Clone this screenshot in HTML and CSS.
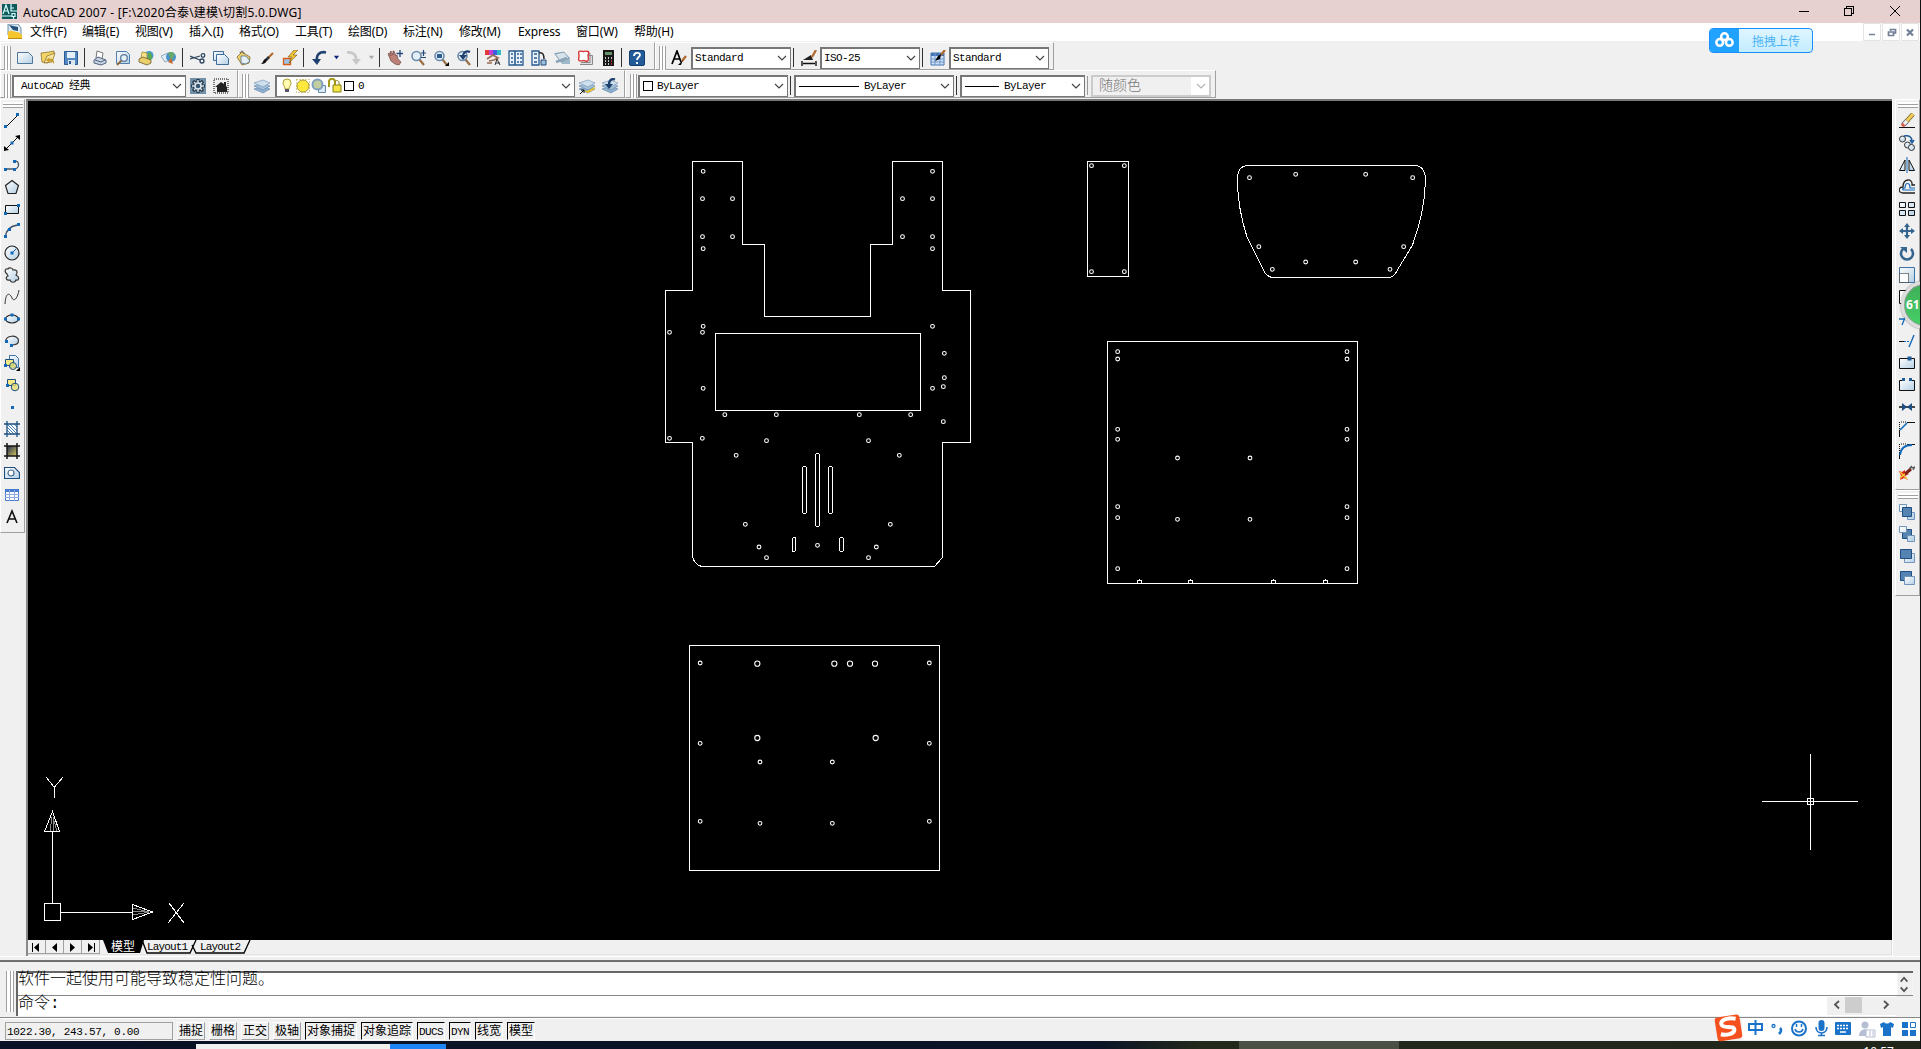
FILE: index.html
```html
<!DOCTYPE html>
<html lang="zh-CN">
<head>
<meta charset="utf-8">
<title>AutoCAD 2007</title>
<link rel="stylesheet" href="styles.css">
</head>
<body>
<svg class="defs" width="0" height="0">
  <defs>
    <linearGradient id="pale" x1="0" y1="0" x2="1" y2="1"><stop offset="0" stop-color="#fff"/><stop offset="1" stop-color="#b4cfe4"/></linearGradient>
    <linearGradient id="dusk" x1="0" y1="0" x2="1" y2="1"><stop offset="0" stop-color="#1d2b50"/><stop offset="1" stop-color="#d8c860"/></linearGradient>
    <symbol id="layers" viewBox="0 0 16 16"><path d="M0 11l9-3 7 3-7 4z" fill="#8fb0ce" stroke="#5a81a8" stroke-width=".6"/><path d="M0 8l9-3 7 3-7 4z" fill="#a5c1da" stroke="#5a81a8" stroke-width=".6"/><path d="M0 5l9-3 7 3-7 4z" fill="#cfdfec" stroke="#6a8fb4" stroke-width=".6"/></symbol>
    <symbol id="brush" viewBox="0 0 16 16"><path d="M14 3L9 8" stroke="#b06a30" stroke-width="2.200"/><path d="M10 7L7 10" stroke="#333" stroke-width="2.600"/><path d="M8 9c0 4-3 5-6 5 2-1 2-4 4-5z" fill="#111"/></symbol>
    <symbol id="lens" viewBox="0 0 16 16"><path d="M9 9l5 6" stroke="#9a7048" stroke-width="2.200"/><circle cx="6.500" cy="6" r="4.500" fill="#e2eef8" stroke="#6d8bab" stroke-width="1.600"/></symbol>
    <symbol id="chev" viewBox="0 0 10 8"><path d="M1 2l4 4 4-4" fill="none" stroke="currentColor" stroke-width="1.200"/></symbol>
    <marker id="hole" markerUnits="userSpaceOnUse" markerWidth="20" markerHeight="20" viewBox="-10 -10 20 20"><circle r="5.700" fill="none" stroke="#fff" stroke-width="3.200"/></marker>
    <marker id="hole-l" markerUnits="userSpaceOnUse" markerWidth="24" markerHeight="24" viewBox="-12 -12 24 24"><circle r="7.800" fill="none" stroke="#fff" stroke-width="3.200"/></marker>
  </defs>
</svg>
<div class="window">
  <header class="title">
    <svg class="app" viewBox="0 0 15 15"><path fill="#0d5a5c" d="M0 0h15v15H0z"/><path d="M1 10L4 1l3 9M2 7h4M9 0v7h6M9 4h3M10 9.500h3v3h-3zM0 12h10M11.500 13v2" fill="none" stroke="#d9ffff" stroke-width="1.200"/></svg>
    <span class="title-text">AutoCAD 2007 - [F:\2020合泰\建模\切割5.0.DWG]</span>
    <svg class="winbtns" viewBox="0 0 112 18" fill="none" stroke="#000"><path d="M4 8.500h10M49.500 5.500h7v7h-7zM51.500 5V3.500h7v7H57" shape-rendering="crispEdges"/><path d="M95 3l10 10M105 3L95 13"/></svg>
  </header>
  <nav class="menu">
    <svg class="doc" viewBox="0 0 16 16"><path d="M1 0h10l3 4v7H1z" fill="#dbe8f2" stroke="#4a7595" stroke-width=".8"/><path d="M2 1l4 5 5 1V3z" fill="#28527a"/><path d="M1 8c4-3 7 1 10 0l4 3v4H1z" fill="#f5c52c"/><path d="M1 14.500h14" stroke="#b88a14"/></svg>
    <span style="width:52px">文件(F)</span><span style="width:53px">编辑(E)</span><span style="width:54px">视图(V)</span><span style="width:50px">插入(I)</span><span style="width:56px">格式(O)</span><span style="width:53px">工具(T)</span><span style="width:55px">绘图(D)</span><span style="width:56px">标注(N)</span><span style="width:59px">修改(M)</span><span style="width:58px">Express</span><span style="width:58px">窗口(W)</span><span>帮助(H)</span>
    <svg class="mdi" viewBox="0 0 57 18"><path d="M.5.500h17v17H.5zM19.500.500h17v17h-17zM38.500.500h17v17h-17z" fill="#fff" stroke="#e3e3e3"/><path d="M6 11.500h6M25.500 9h5v3.500h-5zM27.500 8V6.500h5V10H31" fill="none" stroke="#718096" stroke-width="1.700"/><path d="M44 6.500l6 6M50 6.500l-6 6" stroke="#718096" stroke-width="2.200"/></svg>
  </nav>
  <div class="bars">
    <div class="row">
      <div class="bar standard"><i class="grip"></i>
        <b><svg viewBox="0 0 16 16"><path d="M.5 2.500h11l4 4v7H.5z" fill="url(#pale)" stroke="#4d7699"/></svg></b>
        <b><svg viewBox="0 0 16 16"><path d="M1 3l8-1 5-1v2l-6 10-6-1z" fill="#f2d469" stroke="#8e7426" stroke-width=".8"/><path d="M4 13l3-7 8-3-3 9z" fill="#f8e5a0" stroke="#8e7426" stroke-width=".8"/><path d="M14 14c1-4-2-6-5-5l1-2-4 3 4 3-1-2c2 0 4 1 5 3z" fill="#c79a2c"/></svg></b>
        <b><svg viewBox="0 0 16 16"><path d="M1.500 1.500h13v13h-13z" fill="#5387c1" stroke="#2c5a91"/><path d="M4 2h8v6H4z" fill="#e6f0fa"/><path d="M5 10h7v5H5z" fill="#dbe5ee"/><path d="M6 11h2v3H6z" fill="#2c5a91"/></svg></b>
        <u></u>
        <b><svg viewBox="0 0 16 16"><path d="M4 8l1-7 6 2-1 6z" fill="#fff" stroke="#777"/><path d="M2 10l4-3 8 3v3l-5 2-7-2z" fill="#c6d2e2" stroke="#53647f"/><path d="M3 10l6 2 4-2" fill="none" stroke="#53647f"/></svg></b>
        <b><svg viewBox="0 0 16 16"><path d="M1.500 1.500h10l3 3v9h-13z" fill="url(#pale)" stroke="#4f80ad"/><path d="M7 10l-5 5" stroke="#8f683b" stroke-width="1.800"/><circle cx="9" cy="8" r="3.300" fill="#e6f0f8" stroke="#5d7d9c" stroke-width="1.300"/></svg></b>
        <b><svg viewBox="0 0 16 16"><circle cx="11" cy="5.500" r="4.500" fill="#489cd0"/><path d="M10 3c3-2 5 3 4 6l-4 1z" fill="#5aa854"/><path d="M3 8l1-6 5 1v6z" fill="#f5e392" stroke="#a98a20" stroke-width=".8"/><path d="M1 9l4-2 8 3v3l-4 2-8-3z" fill="#e9d06a" stroke="#6b5c2c" stroke-width=".8"/></svg></b>
        <b><svg viewBox="0 0 16 16"><path d="M0 6l7-3 4 6-7 3z" fill="#e3ecf4" stroke="#7f98ae" stroke-width=".8"/><circle cx="10" cy="7" r="5" fill="#4a92c9"/><path d="M7 3c4-3 8 1 6 3s0 4-3 4z" fill="#65aa6a"/><path d="M7 12l5 2-2-6z" fill="#d0682a"/></svg></b>
        <u></u>
        <b><svg viewBox="0 0 16 16" fill="none" stroke="#2d435c" stroke-width="1.300"><path d="M0 6l10 4M0 9l10-3"/><circle cx="13" cy="5.500" r="1.800"/><circle cx="12" cy="11" r="2"/></svg></b>
        <b><svg viewBox="0 0 16 16" fill="url(#pale)" stroke="#3f6d99"><path d="M.5 1.500h10v9H.5z"/><path d="M3.500 4.500h8l4 4v6h-12z"/></svg></b>
        <b><svg viewBox="0 0 16 16"><path d="M1 7l5-5 8 5-1 6-7 2z" fill="#ecd16a" stroke="#80662a" stroke-width=".8"/><path d="M5 6l5 0 4 5-4 3-5-1z" fill="#e5eff7" stroke="#52718f" stroke-width=".8"/><path d="M4 3c1-3 4-2 4 1" stroke="#555" fill="none"/></svg></b>
        <b><svg><use href="#brush"/></svg></b>
        <b><svg viewBox="0 0 16 16"><path d="M1.500 8.500h7v6h-7z" fill="#9dc4e4" stroke="#d95b16" stroke-width="1.300"/><path d="M12 0L6 7h4l-3 6 8-8h-4l5-5z" fill="#f2c638" stroke="#70520c" stroke-width=".6"/></svg></b>
        <u></u>
        <b><svg viewBox="0 0 16 16"><path d="M15 2.500C9 1 5 5 6 10" fill="none" stroke="#1f4170" stroke-width="2.600"/><path d="M1 9h9l-4 6z" fill="#1f4170"/></svg></b>
        <b class="tiny"><svg viewBox="0 0 8 8"><path d="M1 2h6L4 6z" fill="#10237a"/></svg></b>
        <b><svg viewBox="0 0 16 16"><path d="M1 2.500c6-1 10 3 9 8" fill="none" stroke="#c8c8c8" stroke-width="2.600"/><path d="M6 9h9l-5 6z" fill="#c8c8c8"/></svg></b>
        <b class="tiny"><svg viewBox="0 0 8 8"><path d="M1 2h6L4 6z" fill="#aaa"/></svg></b>
        <u></u>
        <b><svg viewBox="0 0 16 16"><path d="M1 4l1-1 2 3-1-4 1-1 2 4V1h1l2 5 1-1 1 4 3 3-2 3-4-1-4-3z" fill="#bb8078" stroke="#704840" stroke-width=".7"/><path d="M13 0v7M9.500 3.500h6.500" stroke="#244878" stroke-width="1.300"/></svg></b>
        <b><svg viewBox="0 0 16 16"><use href="#lens"/><path d="M13.500 0v6M11 3h5M11 7.500h5" stroke="#244878" stroke-width="1.200"/></svg></b>
        <b><svg viewBox="0 0 16 16"><use href="#lens"/><path d="M4 4h5v4H4z" fill="#2c5e90"/><path d="M16 12v4h-4z"/></svg></b>
        <b><svg viewBox="0 0 16 16"><use href="#lens"/><path d="M14 2C10 0 7 3 7 6" fill="none" stroke="#1f4170" stroke-width="2.300"/><path d="M3 5h8l-4 5z" fill="#1f4170"/></svg></b>
        <u></u>
        <b><svg viewBox="0 0 16 16"><path d="M0 0h4v5H0z" fill="#e53838"/><path d="M4 0h4v5H4z" fill="#c83ed0"/><path d="M8 0h4v5H8z" fill="#3f5ee5"/><path d="M12 0h4v5h-4z" fill="#30b8c0"/><path d="M2 9l6-4 5 3-4 2-5 1M2 13h5" stroke="#9a6b53" stroke-width="1.700" fill="none"/><path d="M10 15l2-6 3 6M11 13h4" stroke="#333" fill="none"/></svg></b>
        <b><svg viewBox="0 0 16 16"><path d="M1 1h14v14H1z" fill="#e9f2fa" stroke="#285a8e" stroke-width="1.300"/><path d="M7 1v14M3 4h2M3 8h2M3 12h2M9 4h2M9 8h2M9 12h2M12 4h2M12 8h2M12 12h2" stroke="#285a8e" stroke-width="1.600"/></svg></b>
        <b><svg viewBox="0 0 16 16"><path d="M1 1h7v14H1z" fill="#e9f2fa" stroke="#285a8e" stroke-width="1.300"/><path d="M3 4h3M3 8h3M3 12h3" stroke="#285a8e" stroke-width="1.600"/><path d="M8 3c4-1 5 2 5 6" fill="none" stroke="#222" stroke-width="1.500"/><path d="M10 10h5v5h-5z" fill="#9cc0dd" stroke="#244878"/></svg></b>
        <b><svg viewBox="0 0 16 16"><path d="M0 3l9-1 7 6v6H8z" fill="#9fb8ca"/><path d="M1 4l9-2 5 6-8 4z" fill="#d7e3eb" stroke="#7591a6" stroke-width=".8"/><path d="M2 12l11-4" stroke="#8da4b6" stroke-width="2.500"/></svg></b>
        <b><svg viewBox="0 0 16 16"><path d="M4 3.500h9v9H4M6 5.500h9.500v9H3" fill="#ddd" stroke="#888"/><path d="M2 1.500c2-1 3 0 4 0s3-1 5 0 0 3 0 4 1 3 0 5-3 0-4 0-4 1-5 0 0-3 0-5-1-3 0-4z" fill="#fff" stroke="#d83838" stroke-width="1.400"/></svg></b>
        <b><svg viewBox="0 0 16 16"><path d="M3 0h11v16H3z" fill="#181818"/><path d="M5 2h7v3H5z" fill="#69906c"/><path d="M5 8h1M8 8h1M11 8h1M5 11h1M8 11h1M5 14h1M8 14h1" stroke="#fff" stroke-width="1.500"/><path d="M11 11h1M11 14h1" stroke="#e33" stroke-width="1.500"/></svg></b>
        <u></u>
        <b><svg viewBox="0 0 16 16"><rect x=".5" y=".5" width="15" height="15" rx="1.500" fill="#235b99" stroke="#153e70"/><path d="M5 6c0-4 6-4 6-1 0 2-3 2-3 5M8 12v2" fill="none" stroke="#fff" stroke-width="1.800"/></svg></b>
      </div>
      <div class="bar styles"><i class="grip"></i>
        <b class="wide"><svg viewBox="0 0 16 16"><path d="M1 14L6 1l4 11M3 9h6" fill="none" stroke="#000" stroke-width="1.700"/><path d="M15 6l-4 5" stroke="#b06a30" stroke-width="2.300"/><path d="M12 10l-5 5h3z"/></svg></b>
        <div class="combo w100"><span>Standard</span><svg><use href="#chev"/></svg></div><u></u>
        <b class="mid"><svg viewBox="0 0 16 16"><path d="M1 11v5M15 11v5M2 13.500h12" stroke="#111" stroke-width="1.400"/><path d="M2 10l8-5 2 5z" fill="#222"/><path d="M15 0l-4 7" stroke="#b06a30" stroke-width="2.300"/></svg></b>
        <div class="combo w100"><span>ISO-25</span><svg><use href="#chev"/></svg></div><u></u>
        <b class="mid"><svg viewBox="0 0 16 16"><path d="M1 3h13v12H1z" fill="#cfe1f4" stroke="#4574b4"/><path d="M1 4.500h13" stroke="#4574b4" stroke-width="3"/><path d="M1 9h13M1 12h13M5 3v12M10 3v12" stroke="#6f98cc"/><path d="M15 0l-4 5" stroke="#b06a30" stroke-width="2.300"/><path d="M11 4l-1 5-5 2 3-5z"/></svg></b>
        <div class="combo w100"><span>Standard</span><svg><use href="#chev"/></svg></div>
      </div>
    </div>
    <div class="row">
      <div class="bar works"><i class="grip"></i>
        <div class="combo w174"><span>AutoCAD 经典</span><svg><use href="#chev"/></svg></div>
        <b><svg viewBox="0 0 16 16"><path d="M0 0h16v16H0z" fill="#7291a8"/><path d="M8 1v14M1 8h14M3 3l10 10M13 3L3 13" stroke="#26394a" stroke-width="3.200"/><circle cx="8" cy="8" r="5" fill="#26394a"/><path d="M8 2v12M2 8h12M4 4l8 8M12 4l-8 8" stroke="#dce6ee" stroke-width="1.400"/><circle cx="8" cy="8" r="3" fill="#35546f" stroke="#dce6ee" stroke-width="1.500"/></svg></b>
        <b><svg viewBox="0 0 16 16"><path d="M1 1h14v14H1z" fill="none" stroke="#777" stroke-width="2" stroke-dasharray="1 1"/><path d="M2 9l6-5 3 2V4h2v4l1 1v5H4V9z" fill="#222"/></svg></b>
      </div>
      <div class="bar layerbar"><i class="grip"></i>
        <b class="lay"><svg><use href="#layers"/></svg></b>
        <div class="combo w300 states">
          <svg viewBox="0 0 16 16"><path d="M6 11c0-3-2-3-2-6a4 4 0 018 0c0 3-2 3-2 6z" fill="#fffbb0" stroke="#b0a030"/><path d="M6 11h4v3H6z" fill="#556"/></svg>
          <svg viewBox="0 0 16 16"><path d="M1.500 1.500h13v13h-13z" fill="none" stroke="#b0a030" stroke-dasharray="1 2"/><circle cx="8" cy="8" r="6" fill="#ffe83c" stroke="#a8983a"/></svg>
          <svg viewBox="0 0 16 16"><path d="M7.500 7.500h7v7h-7z" fill="#dce9f3" stroke="#6788a8"/><circle cx="6.500" cy="6.500" r="5" fill="#c2cda0" stroke="#7f9fbe" stroke-width="2"/></svg>
          <svg viewBox="0 0 16 16"><path d="M2 9V3c1-3 5-3 6 0v4" fill="none" stroke="#a39a18" stroke-width="2"/><path d="M6 7h8v7H6z" fill="#f2e548" stroke="#8a8010"/><path d="M12 7V4c-1-2-3-2-4 0" fill="none" stroke="#8a8010"/></svg>
          <em></em><span>0</span><svg class="end"><use href="#chev"/></svg>
        </div>
        <b><svg viewBox="0 0 16 16"><use href="#layers"/><path d="M3 12l5 1 8-4v2l-7 4z" fill="#e7c42d"/><path d="M1 16l4-4M2 12h3v3" stroke="#111" fill="none"/></svg></b>
        <b><svg viewBox="0 0 16 16"><use href="#layers"/><path d="M13 1.500C9 0 7 3 7 7" stroke="#1f4170" stroke-width="2.400" fill="none"/><path d="M3 6h8l-4 5z" fill="#1f4170"/></svg></b>
      </div>
      <div class="bar props"><i class="grip"></i>
        <div class="combo w150"><em></em><span>ByLayer</span><svg><use href="#chev"/></svg></div><u></u>
        <div class="combo w160"><s style="width:60px"></s><span>ByLayer</span><svg><use href="#chev"/></svg></div><u></u>
        <div class="combo w125"><s style="width:34px"></s><span>ByLayer</span><svg><use href="#chev"/></svg></div><u class="dim"></u>
        <div class="combo w120 off"><span>随颜色</span><svg><use href="#chev"/></svg></div>
      </div>
    </div>
  </div>

  <main class="work">
    <aside class="side left"><div class="vbar"><i class="hgrip"></i>
      <svg viewBox="0 0 16 16"><path d="M2 14L14 2" stroke="#111"/><path d="M0 12h3v3H0zM12 0h3v3h-3z" fill="#1269b8"/></svg>
      <svg viewBox="0 0 16 16"><path d="M1 15L15 1" stroke="#111"/><path d="M0 16v-5l5 4zM16 0v5l-5-4z"/><path d="M6.500 6.500h3v3h-3z" fill="#1269b8"/></svg>
      <svg viewBox="0 0 16 16"><path d="M1 12h9M10 4c6-1 6 8 0 8" fill="none" stroke="#456" stroke-width="1.300"/><path d="M0 11h3v3H0zM9 11h3v3H9zM9 3h3v3H9z" fill="#1269b8"/></svg>
      <svg viewBox="0 0 16 16"><path d="M8 1.500l6.500 5-2.500 8H4l-2.500-8z" fill="url(#pale)" stroke="#222" stroke-width="1.200"/></svg>
      <svg viewBox="0 0 16 16"><path d="M1.500 4.500h13v8h-13z" fill="url(#pale)" stroke="#111"/><path d="M0 11h3v3H0zM13 3h3v3h-3z" fill="#1269b8"/></svg>
      <svg viewBox="0 0 16 16"><path d="M1.500 14C2 7 6 3 14 2" fill="none" stroke="#456" stroke-width="1.300"/><path d="M0 12h3v3H0zM4 5h3v3H4zM13 0h3v3h-3z" fill="#1269b8"/></svg>
      <svg viewBox="0 0 16 16"><circle cx="8" cy="8" r="7" fill="url(#pale)" stroke="#222" stroke-width="1.200"/><path d="M8 8l4-4" stroke="#1269b8"/><path d="M6.500 6.500h3v3h-3z" fill="#1269b8"/></svg>
      <svg viewBox="0 0 16 16"><path d="M3 7C0 5 1 1 4 2c1-2 5-1 5 1 4-1 5 2 3 5 4 2 3 6 0 5-1 3-5 3-6 0-4 1-5-3-2-4z" fill="url(#pale)" stroke="#333" stroke-width="1.200"/></svg>
      <svg viewBox="0 0 16 16"><path d="M1 15C2 0 7 6 8 9s5 3 7-8" fill="none" stroke="#333"/></svg>
      <svg viewBox="0 0 16 16"><ellipse cx="8" cy="8" rx="6.500" ry="4" fill="url(#pale)" stroke="#222" stroke-width="1.200"/><path d="M0 6.500h3v3H0zM13 6.500h3v3h-3zM6.500 2.500h3v3h-3z" fill="#1269b8"/></svg>
      <svg viewBox="0 0 16 16"><path d="M2 9C0 2 15 1 14.500 8c0 3-4 4-7 4" fill="url(#pale)" stroke="#333" stroke-width="1.200"/><path d="M1 7h3v3H1zM6 11h3v3H6z" fill="#1269b8"/></svg>
      <svg viewBox="0 0 16 16"><path d="M5.500.5h6l3 3v9h-9z" fill="url(#pale)" stroke="#3b72a8"/><path d="M1.500 4.500h8v6h-8z" fill="#f2e884" stroke="#1d4f80"/><circle cx="9" cy="11" r="3.500" fill="#e7df73" fill-opacity=".8" stroke="#1d4f80"/><path d="M0 9h3v3H0z" fill="#1269b8"/><path d="M16 12v4h-4z"/></svg>
      <svg viewBox="0 0 16 16"><path d="M3.500 2.500h8v6h-8z" fill="#f2e884" stroke="#1d4f80"/><circle cx="11" cy="10" r="3.800" fill="#e7df73" fill-opacity=".8" stroke="#1d4f80"/><path d="M2 7h3v3H2z" fill="#1269b8"/></svg>
      <svg viewBox="0 0 16 16"><path d="M7 7h3v3H7z" fill="#1269b8"/></svg>
      <svg viewBox="0 0 16 16"><path d="M3 3h10v10H3z" fill="#fff"/><path d="M3 9l4 4M3 6l7 7M3 3l10 10M6 3l7 7M10 3l3 3" stroke="#4c83b4"/><path d="M0 3h16M0 13h16M3 0v16M13 0v16" stroke="#1d4f80" stroke-width="1.300"/></svg>
      <svg viewBox="0 0 16 16"><path d="M3 3h10v10H3z" fill="url(#dusk)"/><path d="M0 3h16M0 13h16M3 0v16M13 0v16" stroke="#151515" stroke-width="1.500"/></svg>
      <svg viewBox="0 0 16 16"><path d="M.5 2.500h10l5 5v6H.5z" fill="url(#pale)" stroke="#1d4f80" stroke-width="1.200"/><circle cx="7" cy="8" r="3" fill="#fff" stroke="#456c92" stroke-width="1.200"/></svg>
      <svg viewBox="0 0 16 16"><path d="M1.500 2.500h13v11h-13z" fill="#fff" stroke="#477bd0"/><path d="M1 2h14v3H1z" fill="#477bd0"/><path d="M1 7.500h14M1 10.500h14M5.500 3v11M10.500 3v11" stroke="#8aaae0"/></svg>
      <svg viewBox="0 0 16 16"><path d="M3 14L8 2l5 12M5 10h6" fill="none" stroke="#111" stroke-width="1.600"/></svg>
    </div></aside>

    <section class="frame">
      <svg class="model" viewBox="28 101 1864 839" shape-rendering="crispEdges" fill="none" stroke="#fff">
        <path d="M692.500 161.500h50v83h22v72h106v-72h22v-83h50v129h28v152h-28v115l-8 9h-233q-9-3-9-12v-112h-27v-152h27zM715.500 333.500h205v77h-205z"/>
        <rect x="802.500" y="466.500" width="4" height="47" rx="2"/><rect x="815.500" y="453.500" width="4" height="73" rx="2"/><rect x="828.500" y="466.500" width="4" height="47" rx="2"/><rect x="792.500" y="537.500" width="3" height="14" rx="1.500"/><rect x="839.500" y="537.500" width="4" height="14" rx="2"/>
        <path d="M1087.500 161.500h41v115h-41zM1107.500 341.500h250v242h-250zM689.500 645.500h250v225h-250z"/>
        <path d="M1246.500 165.500h170q9 2 9 15C1425 199 1421 222 1412.500 245L1398 269Q1395 276 1390 277.500H1271.500Q1267 276 1265 273L1247 237Q1237 206 1237.500 176.500Q1238 167 1246.500 165.500z"/>
        <g transform="translate(650 140) scale(.33333)" stroke="none" marker-start="url(#hole)" marker-mid="url(#hole)" marker-end="url(#hole)">
          <polyline points="159.500,94 157.500,176 247.500,176 157.500,290 247.500,290 159.500,326 159.500,559 157.500,577 58.500,577 159.500,745 58.500,895 157,895 224.500,824 379,824 349.500,902 258.500,946"/>
          <polyline points="847.500,94 757.500,176 847.500,176 757.500,290 847.500,290 847.500,326 847.500,559 883,640 883,713 880,740 847.500,745 880,845 782,824 628,824 655.500,902 748,946"/>
          <polyline points="286,1153 721,1153 327,1221 679,1221 349.500,1253 655.500,1253 502.500,1216"/>
        </g>
        <g transform="translate(1070 140) scale(.33333)" stroke="none" marker-start="url(#hole)" marker-mid="url(#hole)" marker-end="url(#hole)">
          <polyline points="64.500,77 163,77 64.500,395 163,395"/>
          <polyline points="538.500,113 677,103 887,103 1028,113 1001,320 960,388 857,366 707,366 607,388 566.500,320"/>
          <polyline points="143,635 143,657 143,868 143,898 143,1100 143,1133 143,1286 831,1286 831,1133 831,1100 831,898 831,868 831,657 831,635"/>
          <polyline points="322.500,954 540,954 322.500,1138 540,1138"/>
        </g>
        <path d="M1137.500 583v-2l2-1 2 1v2M1188.500 583v-2l2-1 2 1v2M1271.500 583v-2l2-1 2 1v2M1323.500 583v-2l2-1 2 1v2"/>
        <g transform="translate(670 630) scale(.33333)" stroke="none">
          <polyline marker-start="url(#hole)" marker-mid="url(#hole)" marker-end="url(#hole)" points="90.500,99 778,99 778,340 778,574 487,580 487,396 270,396 270,580 90.500,574 90.500,340"/>
          <polyline marker-start="url(#hole-l)" marker-mid="url(#hole-l)" marker-end="url(#hole-l)" points="262,101 493,101 540,101 615,101 617,324 262,324"/>
        </g>
        <path d="M44.500 903.500h16v17h-16zM52.500 903v-72M61 912.500h71M44.500 831.500h15l-7-20zM132.500 904.500v15l20-7.500zM46 777l8 10M63 777l-8.500 10v11M169 903l15 20M184 903l-16 20"/>
        <path d="M50 831l2-14M54 831l-1-14M57 831l-4-14M133 908l16 4M133 911h16M133 915l16-3" stroke="#888"/>
        <path d="M1810.500 754v96M1762 801.500h96M1807.500 798.500h6v6h-6z"/>
      </svg>
      <div class="tabs">
        <svg viewBox="0 0 72 14" class="navs"><path d="M0 0h72v14H0z" fill="#f0f0f0"/><path d="M17.500 0v13.500M35.500 0v13.500M53.500 0v13.500M71.500 0v13.500M0 13.500h72" stroke="#a0a0a0"/><path d="M4 3h1v9H4zM11 3v9L6 7.500zM29 3v9l-5-4.500zM42 3v9l5-4.500zM60 3v9l5-4.500zM66 3h1v9h-1z"/></svg>
        <svg class="tabshapes" viewBox="100 0 152 14"><path d="M103 0l5 13h32l4-13z"/><path d="M142 0l5 13h43l6-13M192 5l4 8h48l6-13" fill="none" stroke="#000" stroke-width="1.300"/><g class="tabtext"><text class="cn" x="111" y="11" fill="#fff">模型</text><text x="147" y="9.500" textLength="41">Layout1</text><text x="200" y="9.500" textLength="41">Layout2</text></g></svg>
      </div>
    </section>

    <aside class="side right"><div class="vbar"><i class="hgrip"></i>
      <svg viewBox="0 0 16 16"><path d="M0 14.500h16" stroke="#111"/><path d="M14 1L7 9" stroke="#7a6430" stroke-width="4.500"/><path d="M14 1L7 9" stroke="#f0cc58" stroke-width="3"/><path d="M8 8l-4 4" stroke="#555" stroke-width="5"/><path d="M8 8l-4 4" stroke="#eee" stroke-width="3.500"/><path d="M5 11l-2 2" stroke="#d85c48" stroke-width="3.500"/></svg>
      <svg viewBox="0 0 16 16" fill="url(#pale)" stroke="#333"><circle cx="3.500" cy="4" r="3"/><circle cx="8.500" cy="10" r="3"/><circle cx="12.500" cy="12.500" r="3"/><path d="M5 1c5-1 8 1 8 5M11 5l2 3 2-3" fill="none" stroke="#1d5b99" stroke-width="1.500"/></svg>
      <svg viewBox="0 0 16 16"><path d="M6 3v10.500H.5zM10 3v10.500h5.500z" fill="url(#pale)" stroke="#111"/><path d="M8 0v16" stroke="#1269b8"/></svg>
      <svg viewBox="0 0 16 16"><path d="M16 14H4c-5 0-5-6 0-6 0-9 10-9 9-2h3" fill="none" stroke="#222" stroke-width="1.300"/><path d="M16 11H5c-2 0-2-2 1-2 0-6 5-6 5 0h5" fill="none" stroke="#1269b8" stroke-width="1.200"/></svg>
      <svg viewBox="0 0 16 16" fill="url(#pale)" stroke="#111"><path d="M.5 1.500h6v5h-6zM9.500 1.500h6v5h-6zM.5 9.500h6v5h-6zM9.500 9.500h6v5h-6z"/></svg>
      <svg viewBox="0 0 16 16"><path d="M8 2v12M2 8h12" stroke="#36658f" stroke-width="2.200"/><path d="M8 0l3 4H5zM8 16l3-4H5zM0 8l4-3v6zM16 8l-4-3v6z" fill="#36658f"/></svg>
      <svg viewBox="0 0 16 16"><path d="M4 4a6 6 0 108 0" fill="none" stroke="#36658f" stroke-width="2.600"/><path d="M1 2h7v6z" fill="#36658f"/></svg>
      <svg viewBox="0 0 16 16"><path d="M.5.500h15v15H.5z" fill="url(#pale)" stroke="#3b72a8"/><path d="M.5 6.500h9v9h-9z" fill="#fff" stroke="#111" stroke-dasharray="1 1"/></svg>
      <svg viewBox="0 0 16 16"><path d="M.5 1.500h14v13H.5z" fill="#fff" stroke="#111"/></svg>
      <svg viewBox="0 0 16 16"><path d="M0 8h5M9 8h6M3 14L8 2" stroke="#1269b8" stroke-width="1.300"/></svg>
      <svg viewBox="0 0 16 16"><path d="M0 8.500h5" stroke="#111"/><path d="M5 8.500h6" stroke="#1269b8" stroke-dasharray="2 1"/><path d="M10 14l5-12" stroke="#1269b8" stroke-width="1.400"/></svg>
      <svg viewBox="0 0 16 16"><path d="M.5 3.500h15v10H.5z" fill="url(#pale)" stroke="#111"/><path d="M8.500 1.500h4v4h-4z" fill="#1d5b99"/></svg>
      <svg viewBox="0 0 16 16"><path d="M1 3h14v11H1z" fill="url(#pale)"/><path d="M3 3.500H.5v10h15v-10H13" fill="none" stroke="#111"/><path d="M3 1h3v3H3zM10 1h3v3h-3z" fill="#1d5b99"/></svg>
      <svg viewBox="0 0 16 16"><path d="M0 8h16" stroke="#111" stroke-width="1.500"/><path d="M3 4l5 4-5 4zM13 4L8 8l5 4z" fill="#1d4f80"/></svg>
      <svg viewBox="0 0 16 16" fill="none"><path d="M2 1h5M.5 1v8" stroke="#111" stroke-dasharray="1 1"/><path d="M.5 9v7M8 1.500h8" stroke="#111"/><path d="M1 9l7-7" stroke="#1269b8" stroke-width="1.600"/></svg>
      <svg viewBox="0 0 16 16" fill="none"><path d="M2 1h5M.5 1v8" stroke="#111" stroke-dasharray="1 1"/><path d="M.5 9v7M8 1.500h8" stroke="#111"/><path d="M1 12Q2 2 13 2" stroke="#1269b8" stroke-width="1.800"/></svg>
      <svg viewBox="0 0 16 16"><path d="M0 6l3 1 3-2v3l4 1-4 2 3 4-4-2-4 2 1-4z" fill="#e42818"/><path d="M1 7l7 7M1 13l7-6" stroke="#f5c43a" stroke-width="1.500"/><path d="M6 9l6-5" stroke="#7a1f18" stroke-width="3"/><path d="M10 4l3-3M12 1l1 2 3-1-2 3" stroke="#555" stroke-width="1.200" fill="none"/></svg>
    </div>
    <div class="vbar order"><i class="hgrip"></i>
      <svg viewBox="0 0 16 16"><path d="M.5.500h7v7h-7zM8.500 8.500h7v7h-7z" fill="url(#pale)" stroke="#6f95ba"/><path d="M3.500 3.500h9v9h-9z" fill="#5583b2" stroke="#1d4f80"/></svg>
      <svg viewBox="0 0 16 16"><path d="M3.500 3.500h9v9h-9z" fill="#5583b2" stroke="#1d4f80"/><path d="M.5.500h7v6h-7zM8.500 9.500h7v6h-7z" fill="url(#pale)" stroke="#6f95ba"/></svg>
      <svg viewBox="0 0 16 16"><path d="M5.500 5.500h10v9h-10z" fill="url(#pale)" stroke="#6f95ba"/><path d="M1.500 1.500h11v9h-11z" fill="#5583b2" stroke="#1d4f80"/></svg>
      <svg viewBox="0 0 16 16"><path d="M1.500 1.500h11v9h-11z" fill="#5583b2" stroke="#1d4f80"/><path d="M5.500 6.500h10v8h-10z" fill="url(#pale)" stroke="#6f95ba"/></svg>
    </div></aside>
  </main>

  <section class="command">
    <i class="cgrip"></i>
    <div class="cmdbox">
      <div class="history"><span>软件一起使用可能导致稳定性问题。</span><svg class="vscroll" viewBox="0 0 16 23"><path d="M0 0h16v23H0z" fill="#f0f0f0"/><path d="M3.500 9L7 5l3.500 4M3.500 15L7 19l3.500-4" fill="none" stroke="#555" stroke-width="1.800"/></svg></div>
      <div class="prompt"><span>命令:</span><svg class="hscroll" viewBox="0 0 69 18"><path d="M0 0h69v18H0z" fill="#f0f0f0"/><path d="M18 0h17v16H18z" fill="#cdcdcd"/><path d="M12 4L8 7.500l4 4M57 4l4 3.500-4 4" fill="none" stroke="#555" stroke-width="1.800"/></svg></div>
    </div>
  </section>

  <footer class="status">
    <div class="coords">1022.30, 243.57, 0.00</div>
    <span style="width:28px">捕捉</span><span style="width:28px">栅格</span><span style="width:28px">正交</span><span style="width:28px">极轴</span><span class="on" style="width:52px">对象捕捉</span><span class="on" style="width:52px">对象追踪</span><span class="on latin" style="width:28px">DUCS</span><span class="on latin" style="width:22px">DYN</span><span class="on" style="width:28px">线宽</span><span class="on" style="width:28px">模型</span>
  </footer>
  <div class="taskbar"><i class="search"></i><i class="accent"></i><i class="task"></i><time>10:57</time></div>

  <div class="upload"><svg viewBox="0 0 30 24" fill="none" stroke="#fff" stroke-width="2.600"><circle cx="15" cy="8" r="3.500"/><circle cx="10" cy="14" r="3.500"/><circle cx="20" cy="14" r="3.500"/></svg><span>拖拽上传</span></div>
  <div class="ball">61</div>
  <svg class="ime" viewBox="1713 1013 207 29">
    <path d="M1742 1018h178v22h-178z" fill="#fff"/>
    <g transform="rotate(-9 1728 1028)"><rect x="1716" y="1016" width="25" height="24" rx="3" fill="#f4511e"/><path d="M1737 1020c-6-2-15-2-15 3 0 6 13 2 12 8-1 4-9 4-14 2" fill="none" stroke="#fff" stroke-width="4"/></g>
    <g fill="none" stroke="#1b72c9" stroke-width="2"><path d="M1749 1024h13v6h-13zM1755.500 1020v15"/><circle cx="1773.500" cy="1026" r="1.500" stroke-width="1.300"/><path d="M1780 1028c2 2 1 4-1 6" stroke-width="2.500"/><circle cx="1799" cy="1028.500" r="7"/><path d="M1796.500 1024v3M1801.500 1024v3M1795 1029c1 4 7 4 8 0" stroke-width="1.500"/><path d="M1816 1027c0 8 11 8 11 0M1821.500 1033v3M1818 1035.500h7" stroke-width="1.600"/></g>
    <rect x="1818.500" y="1020" width="6" height="11" rx="3" fill="#1b72c9"/><rect x="1835" y="1022" width="16" height="13" rx="1" fill="#1b72c9"/><path d="M1837 1025.500h12M1837 1028.500h12" stroke="#fff" stroke-width="1.500" stroke-dasharray="2 1"/><path d="M1840 1032h6" stroke="#fff" stroke-width="1.500"/>
    <circle cx="1865" cy="1025" r="3.500" fill="#b5bed3"/><path d="M1859 1036c0-9 12-9 12 0z" fill="#b5bed3"/><path d="M1866 1030h9v7h-9z" fill="#fff" stroke="#b5bed3"/><path d="M1870 1031v5M1873 1031v5" stroke="#b5bed3"/>
    <path d="M1880 1024l4-2c1 2 5 2 6 0l4 2-1 4-2-1v9h-8v-9l-2 1z" fill="#1b72c9"/><path d="M1902 1022h6v6h-6zM1902 1030h6v6h-6zM1910 1030h6v6h-6z" fill="#1b72c9"/><path d="M1910.500 1022.500h5v5h-5z" fill="none" stroke="#1b72c9"/>
  </svg>
</div>
</body>
</html>
```
FILE: styles.css
```css
* { box-sizing: border-box; }
body { margin: 0; background: #f0f0f0; overflow: hidden; }
.defs { position: absolute; }
.window {
  position: relative; width: 1921px; height: 1049px; overflow: hidden;
  display: flex; flex-direction: column; border-right: 1px solid #111;
  background: #f0f0f0; color: #000;
  font: 11px "Liberation Mono", "Noto Sans CJK SC", monospace;
}
.window i, .window b, .window u, .window s, .window em { display: block; flex: none; text-decoration: none; font-style: normal; }

.title { height: 23px; flex: none; background: #e6d0d0; display: flex; align-items: center; font: 12px "Noto Sans", "Noto Sans CJK SC", sans-serif; }
.app { width: 15px; height: 15px; margin: 0 6px 0 2px; }
.title-text { white-space: nowrap; letter-spacing: .22px; }
.winbtns { width: 112px; height: 18px; margin: 0 13px 0 auto; }

.menu { height: 18px; flex: none; background: #fff; display: flex; align-items: center; font: 12px "Noto Sans", "Noto Sans CJK SC", sans-serif; }
.menu span { flex: none; white-space: nowrap; letter-spacing: -.15px; margin-top: -2px; }
.doc { width: 16px; height: 16px; margin: 0 7px; }
.mdi { width: 57px; height: 18px; margin-left: auto; }

.bars { height: 57px; flex: none; padding-top: 1px; }
.row { display: flex; height: 28px; }
.bar { display: flex; align-items: center; flex: none; height: 28px; border: 1px solid #a0a0a0; border-top-color: #fff; border-left-color: #fff; padding-top: 3px; }
.bar b { width: 23px; display: flex; justify-content: center; }
.bar b svg { width: 16px; height: 16px; }
.bar b.tiny { width: 12px; }
.bar b.tiny svg { width: 7px; height: 7px; }
.bar u { width: 6px; height: 19px; background: linear-gradient(#333, #333) 2px 0 / 1px 100% no-repeat; }
.grip { width: 7px; height: 24px; border: solid #a0a0a0; border-width: 0 1px; background: linear-gradient(#a0a0a0, #a0a0a0) 2px 0 / 1px 100% no-repeat, #fff; }
.standard { width: 655px; padding-left: 3px; }
.standard .grip { margin-right: 2px; }
.styles { width: 399px; padding-left: 3px; }
.styles .wide { width: 25px; }
.bar b.mid { width: 23px; }
.combo { height: 22px; flex: none; border: 1px solid #777; border-width: 2px 1px 1px 2px; background: #fff; display: flex; align-items: center; padding: 0 3px 0 2px; letter-spacing: -.6px; white-space: nowrap; }
.combo span { line-height: 14px; }
.combo > svg { width: 10px; height: 8px; margin-left: auto; color: #444; }
.w100 { width: 100px; } .w174 { width: 174px; } .w300 { width: 300px; } .w150 { width: 150px; }
.w160 { width: 160px; } .w125 { width: 125px; } .w120 { width: 120px; }
.works { width: 238px; padding-left: 3px; }
.works .grip { margin-right: 1px; }
.works .combo { padding-left: 7px; }
.layerbar { width: 387px; padding-left: 3px; }
.bar b.lay { width: 26px; }
.combo.states > svg { width: 16px; height: 16px; margin: 0; }
.combo.states > .end { width: 10px; height: 8px; margin-left: auto; }
.combo em { width: 10px; height: 10px; border: 1px solid #000; margin: 0 4px 0 1px; }
.combo s { height: 1px; background: #000; margin: 0 5px 0 1px; }
.props { width: 591px; padding-left: 4px; }
.props .grip { margin-right: 1px; }
.bar u.dim { background-image: linear-gradient(#999, #999); }
.off { border: 2px solid #ccc; color: #777; background: linear-gradient(#f0f0f0, #f0f0f0) 0 0 / 98px 100% no-repeat, #fff; padding-left: 6px; letter-spacing: 0; }
.off span { font-size: 14px; line-height: 18px; font-weight: 300; }
.off > svg { opacity: .4; }

.work { height: 857px; flex: none; display: flex; margin-top: 1px; }
.side { width: 26px; flex: none; }
.side.right { width: 28px; padding-left: 2px; border-left: 1px solid #fff; }
.vbar { width: 25px; display: flex; flex-direction: column; align-items: center; height: 434px; border: 1px solid #a0a0a0; border-top-color: #fff; border-left-color: #fff; }
.vbar svg { width: 16px; height: 16px; margin: 0 1px 6px 0; flex: none; }
.hgrip { width: 20px; height: 6px; margin: 2px 0 5px; border: solid #a0a0a0; border-width: 0 0 1px; background: linear-gradient(#a0a0a0, #a0a0a0) 0 2px / 100% 1px no-repeat, #fff; }
.right .vbar { height: 391px; }
.right .vbar.order { height: 106px; }
.frame { width: 1866px; flex: none; border: 2px solid #777; border-width: 2px 0 0 2px; border-color: #777 #fff #fff #888; display: flex; flex-direction: column; }
.model { width: 1864px; height: 839px; background: #000; display: block; }
.tabs { height: 15px; display: flex; border-bottom: 1px solid #e3e3e3; border-right: 1px solid #ddd; }
.navs { width: 72px; height: 14px; }
.tabshapes { width: 152px; height: 14px; }
.tabtext { font: 11px "Liberation Mono", "Noto Sans CJK SC", monospace; }
.tabtext .cn { font-size: 12px; }

.command { height: 61px; flex: none; border-top: 1px solid #fff; display: flex; padding: 14px 7px 0 6px; background: linear-gradient(#777, #666) 0 3px / 100% 2px no-repeat; }
.cgrip { width: 8px; height: 41px; border: solid #a0a0a0; border-width: 0 1px; background: linear-gradient(#a0a0a0, #a0a0a0) 3px 0 / 1px 100% no-repeat, #fff; margin-right: 2px; }
.cmdbox { flex: 1; border: 2px solid #666; border-width: 2px 0 0 2px; height: 45px; font: 300 16px/19px "Liberation Mono", "Noto Sans CJK SC", monospace; }
.history { height: 23px; display: flex; justify-content: space-between; align-items: flex-start; background: #fff; border-bottom: 1px solid #888; }
.history span { line-height: 14px; }
.vscroll { width: 16px; height: 22px; }
.prompt { height: 20px; display: flex; background: #fff; justify-content: space-between; border-right: 17px solid #f0f0f0; }
.prompt span { line-height: 17px; }
.hscroll { width: 69px; height: 18px; margin-top: 1px; }

.status { height: 24px; flex: none; border-top: 1px solid #888; box-shadow: inset 0 1px #fff; display: flex; gap: 4px; padding: 4px 0 0 5px; font: 12px/18px "Noto Sans CJK SC", sans-serif; }
.coords { width: 168px; height: 18px; border: 1px solid #a0a0a0; padding-left: 1px; font: 11px/18px "Liberation Mono", monospace; letter-spacing: -.3px; }
.status span { height: 18px; border: 1px solid #fff; border-color: #fff #a0a0a0 #a0a0a0 #fff; text-align: center; white-space: nowrap; line-height: 18px; font-family: "Liberation Mono", "Noto Sans CJK SC", monospace; }
.status .on { border-color: #000 #fff #fff #000; }
.status .latin { font-size: 11px; letter-spacing: -.6px; }

.taskbar { height: 9px; flex: none; display: flex; overflow: hidden; background: linear-gradient(90deg, #0a1124 0, #0b1426 1100px, #23291b 1200px, #20261a 100%); }
.taskbar i { margin-top: 3px; height: 6px; }
.search { width: 194px; margin-left: 196px; background: #f0f0f0; }
.accent { width: 56px; background: #1d85f5; }
.taskbar .task { width: 160px; height: 9px; margin: 0 0 0 793px; background: linear-gradient(#fff, #fff) 10px 8px / 24px 1px no-repeat, #4b5046; }
.taskbar time { margin: 4px 0 0 auto; padding-right: 26px; color: #fff; font: 12px/13px "Noto Sans", sans-serif; }

.upload { position: absolute; left: 1709px; top: 28px; width: 104px; height: 25px; border: 1px solid #1890ff; border-radius: 4px; overflow: hidden; display: flex; background: linear-gradient(#def5ff, #c4edff); color: #4cb2f5; font: 12px/24px "Noto Sans CJK SC", sans-serif; }
.upload svg { width: 29px; height: 23px; background: #22a2ff; margin-right: 13px; }
.ball { position: absolute; left: 1901px; top: 281px; width: 48px; height: 48px; border-radius: 50%; border: 3px solid #ddd; box-shadow: 0 0 0 1px #999 inset, 0 0 2px #666; background: linear-gradient(#3fae58, #46d068); color: #fff; font: bold 12px/42px "Open Sans", sans-serif; padding-left: 2px; }
.ime { position: absolute; left: 1713px; top: 1013px; width: 207px; height: 29px; }
```
